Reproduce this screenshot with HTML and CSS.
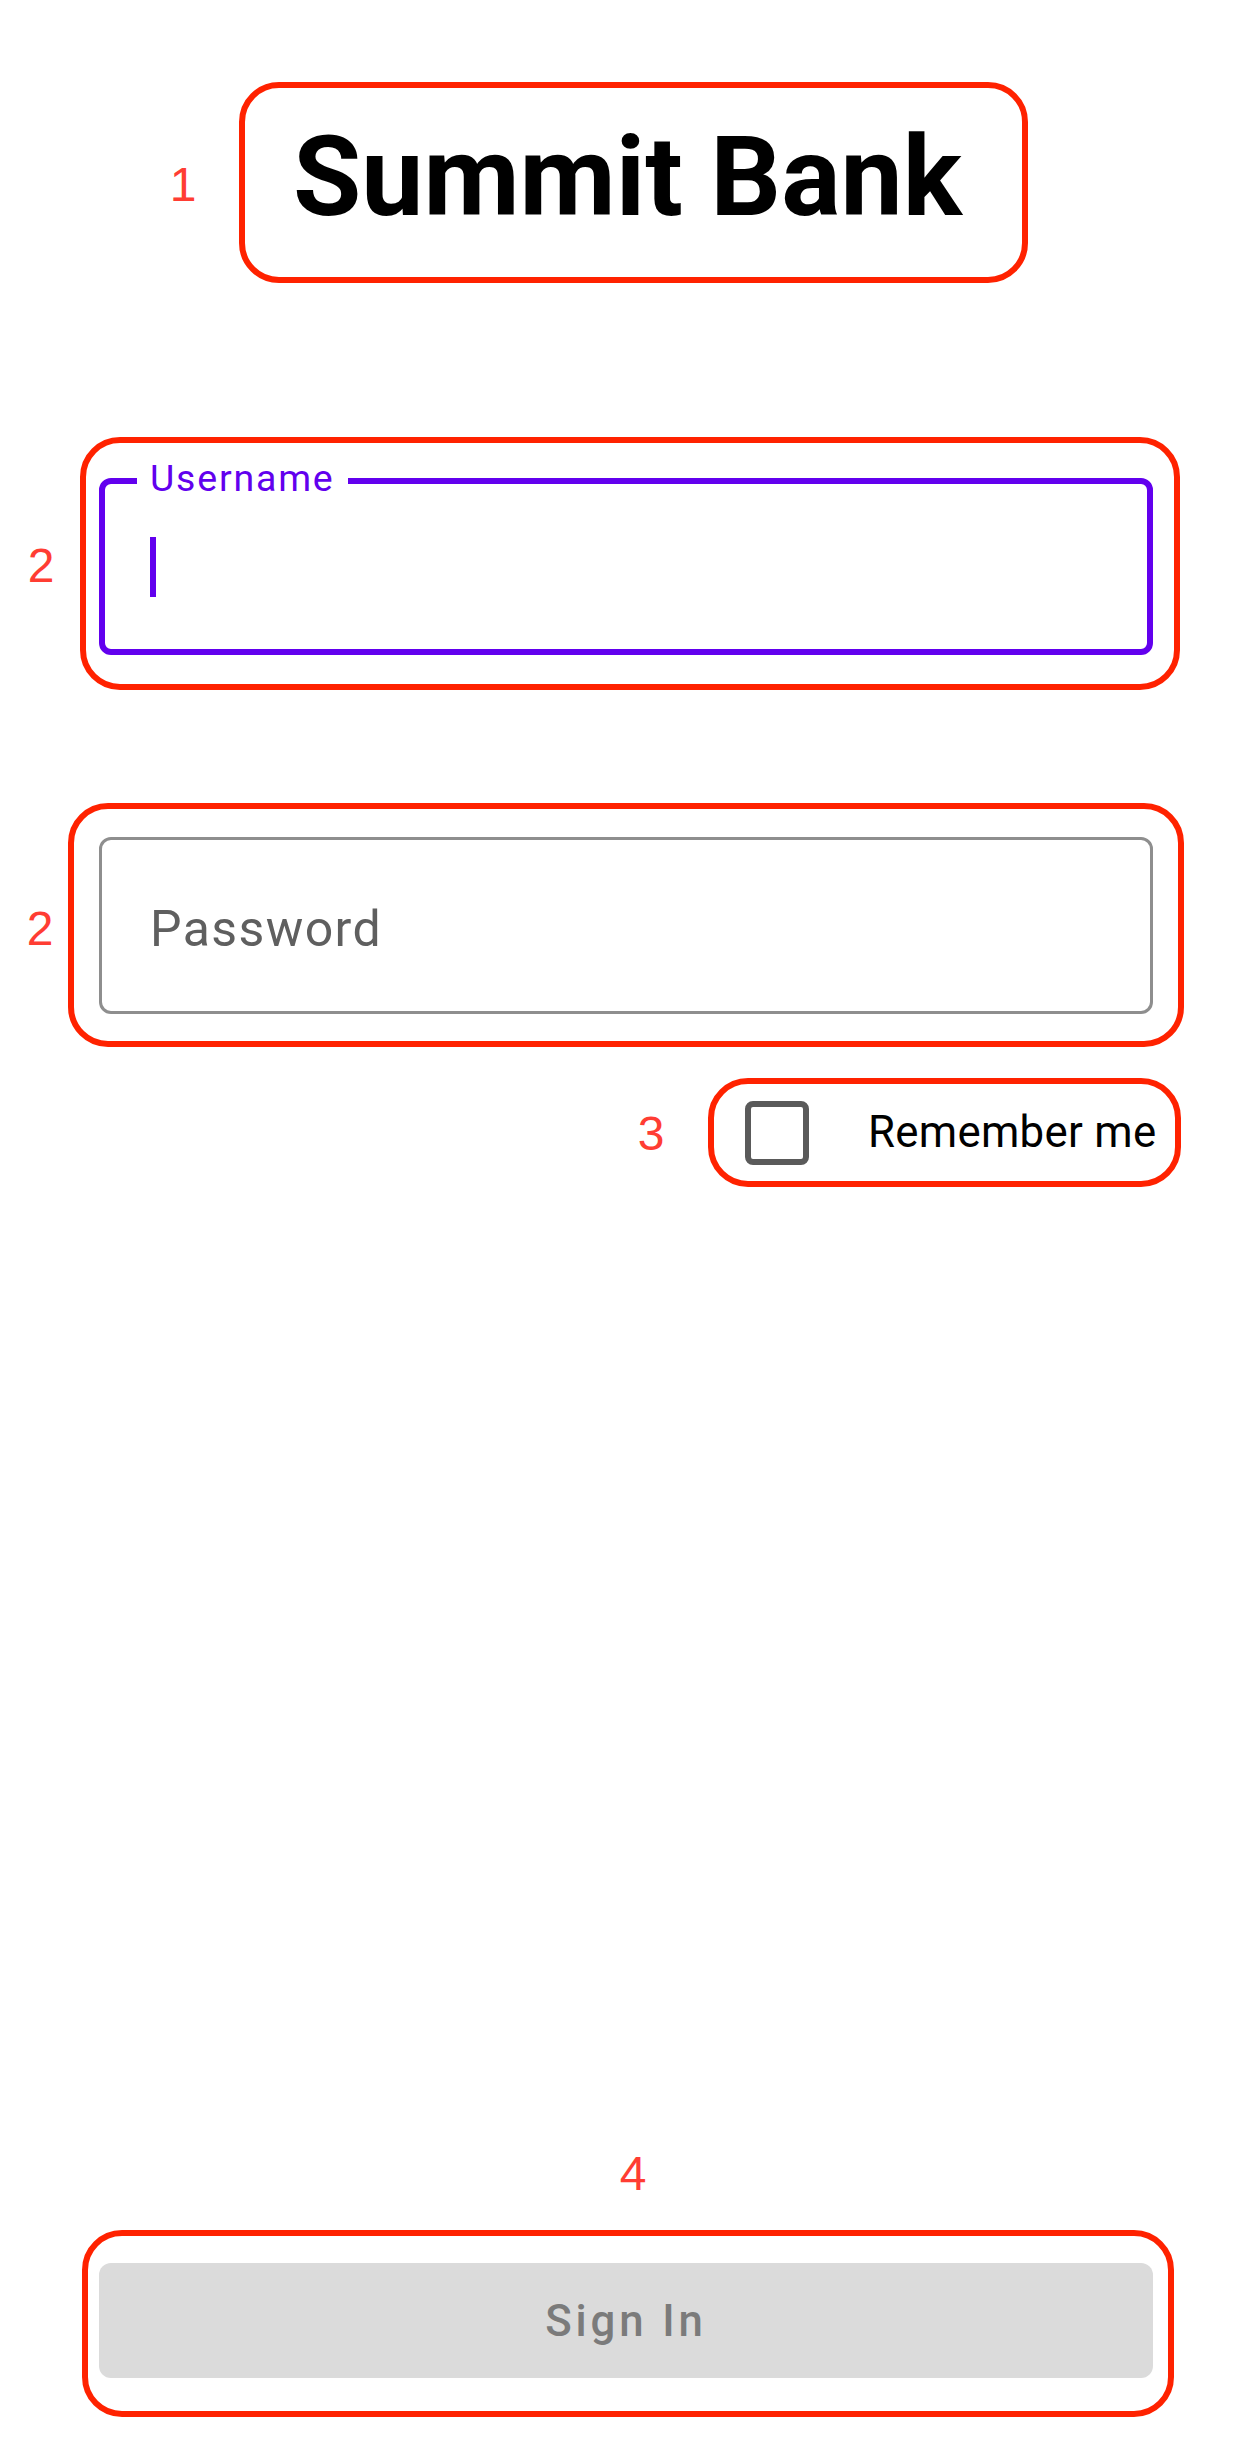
FILE: index.html
```html
<!DOCTYPE html>
<html lang="en">
<head>
<meta charset="utf-8">
<title>Summit Bank</title>
<link rel="stylesheet" href="styles.css">
</head>
<body>
<main class="screen">
  <section class="anno anno-title">
    <span class="tag tag-1">1</span>
    <h1 class="title">Summit Bank</h1>
  </section>

  <section class="anno anno-user">
    <span class="tag tag-2a">2</span>
    <div class="field field-focused">
      <span class="field-label">Username</span>
      <span class="cursor"></span>
    </div>
  </section>

  <section class="anno anno-pass">
    <span class="tag tag-2b">2</span>
    <div class="field field-idle">
      <span class="placeholder">Password</span>
    </div>
  </section>

  <div class="remember-row">
    <section class="anno anno-remember">
      <span class="tag tag-3">3</span>
      <span class="checkbox"></span>
      <span class="remember-text">Remember me</span>
    </section>
  </div>

  <section class="anno anno-button">
    <span class="tag tag-4">4</span>
    <div class="btn">Sign In</div>
  </section>
</main>
</body>
</html>
```

FILE: styles.css
```css
html, body {
  margin: 0;
  padding: 0;
  background: #ffffff;
}

body {
  font-family: Roboto, "Noto Sans", sans-serif;
  color: #000;
}

.screen {
  width: 1250px;
  height: 2454px;
  box-sizing: border-box;
  display: flex;
  flex-direction: column;
  align-items: flex-start;
  padding-bottom: 37px;
}

.anno {
  position: relative;
  box-sizing: border-box;
  border: 6px solid #ff2200;
  border-radius: 40px;
}

.tag {
  position: absolute;
  font-family: "Liberation Sans", Arial, sans-serif;
  font-size: 48px;
  line-height: 48px;
  height: 48px;
  width: 40px;
  text-align: center;
  color: #ff3d33;
}

.tag-1 { left: -82px; top: 73px; }
.tag-2a { left: -65px; top: 99px; }
.tag-2b { left: -54px; top: 96px; }
.tag-3 { left: -83px; top: 26px; }
.tag-4 { left: 525px; top: -86px; }

/* Title */
.anno-title {
  margin-top: 82px;
  margin-left: 239px;
  width: 789px;
  padding: 25px 12px 35px 0;
}

.title {
  margin: 0;
  font-family: Roboto, sans-serif;
  font-weight: 700;
  font-size: 111px;
  line-height: 129px;
  text-align: center;
  color: #000;
}

/* Text fields */
.field {
  position: relative;
  box-sizing: border-box;
  width: 1054px;
  height: 177px;
  border-radius: 12px;
  display: flex;
  align-items: center;
}

.anno-user {
  margin-top: 154px;
  margin-left: 80px;
  width: 1100px;
  padding: 35px 21px 29px 13px;
}

.field-focused {
  border: 6px solid #6200ee;
}

.field-label {
  position: absolute;
  left: 32px;
  top: -28px;
  padding: 0 13px 0 13px;
  background: #fff;
  font-size: 37.5px;
  line-height: 44px;
  letter-spacing: 1.8px;
  color: #6200ee;
}

.cursor {
  display: block;
  width: 6px;
  height: 60px;
  margin-left: 45px;
  background: #6200ee;
}

.anno-pass {
  margin-top: 113px;
  margin-left: 68px;
  width: 1116px;
  padding: 28px 25px 27px 25px;
}

.field-idle {
  border: 3px solid #8e8e8e;
  padding-left: 48px;
  padding-top: 8px;
}

.placeholder {
  font-size: 50px;
  line-height: 59px;
  letter-spacing: 1.4px;
  color: #5f5f5f;
}

/* Remember me */
.remember-row {
  align-self: stretch;
  display: flex;
  justify-content: flex-end;
  padding-right: 69px;
  margin-top: 31px;
}

.anno-remember {
  width: 473px;
  height: 109px;
  padding-left: 31px;
  display: flex;
  align-items: center;
}

.checkbox {
  display: block;
  box-sizing: border-box;
  width: 64px;
  height: 64px;
  border: 6px solid #5a5a5a;
  border-radius: 8px;
  flex-shrink: 0;
}

.remember-text {
  margin-left: 59px;
  font-size: 43.75px;
  line-height: 51px;
  letter-spacing: 0.3px;
  color: #000;
  white-space: nowrap;
}

/* Button */
.anno-button {
  margin-top: auto;
  margin-left: 82px;
  width: 1092px;
  padding: 27px 15px 33px 11px;
}

.btn {
  box-sizing: border-box;
  width: 1054px;
  height: 115px;
  border-radius: 12px;
  background: #dbdbdb;
  display: flex;
  align-items: center;
  justify-content: center;
  font-size: 43.75px;
  font-weight: 500;
  letter-spacing: 3.9px;
  color: #7b7b7b;
}
```
